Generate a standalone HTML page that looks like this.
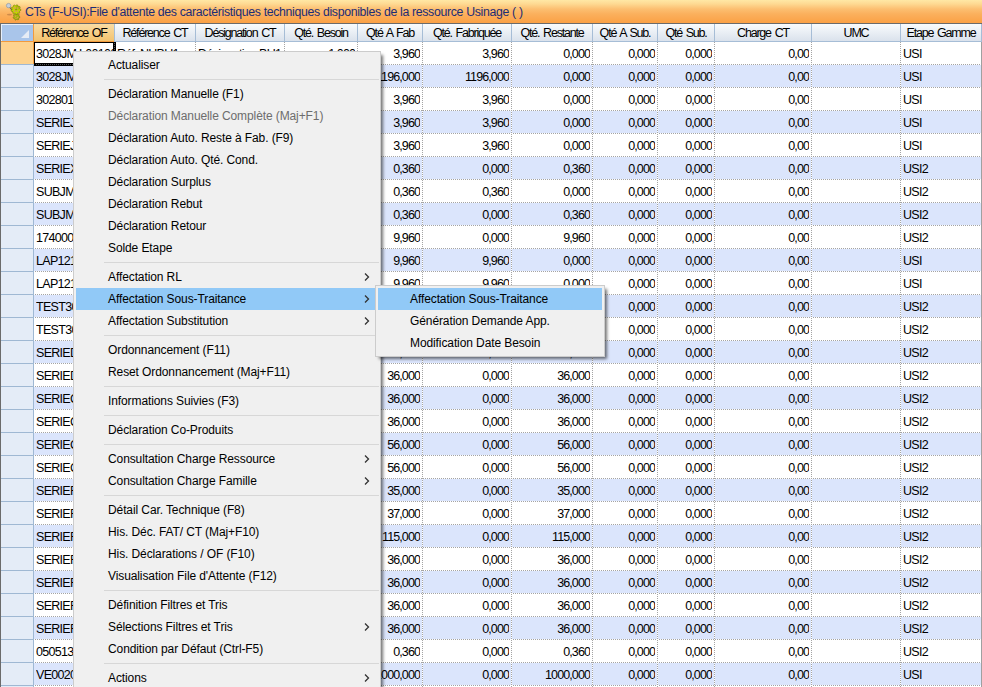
<!DOCTYPE html><html><head><meta charset="utf-8"><style>
*{margin:0;padding:0;box-sizing:border-box}
html,body{width:982px;height:687px;overflow:hidden;background:#fff;position:relative}
body{font-family:"Liberation Sans",sans-serif}
.a{position:absolute}
#title{left:0;top:0;width:982px;height:23px;background:linear-gradient(#ffe8a5 0px,#fed992 4px,#fcbf71 9px,#fbb05d 14px,#fba145 23px)}
#ttext{left:25px;top:5px;font-size:12.3px;letter-spacing:-0.33px;color:#1b2d76;white-space:pre;line-height:14px}
#tline{left:0;top:23px;width:982px;height:1px;background:#6b6b6b}
#lborder{left:0;top:23px;width:1px;height:664px;background:#6b6b6b}
#rborder{left:981px;top:42px;width:1px;height:645px;background:#a0a0a0}
.hdr{top:24px;height:17px;background:linear-gradient(#f9fbfd,#dde4ee);border-bottom:0}
.hb{top:41px;height:1px;background:#a6bdd6}
.hv{top:24px;width:1px;height:18px;background:#a6bdd6}
.ht{top:25px;height:17px;line-height:17px;font-size:12.5px;letter-spacing:-1.2px;word-spacing:1.5px;color:#000;white-space:pre;text-align:center;overflow:hidden}
.row{left:34px;width:947px;height:23px}
.blue{background:#dbe5fc}
.hdots{left:34px;width:947px;height:1px;background:repeating-linear-gradient(90deg,#fff 0 1px,#a4a4a4 1px 2px)}
.vdots{top:42px;width:1px;height:645px;background:repeating-linear-gradient(180deg,#a4a4a4 0 1px,#fff 1px 2px)}
.rh{left:1px;width:32px;height:22px;background:#e4ecf7}
.rhb{left:1px;width:32px;height:1px;background:#9fb8d3}
.cell{height:23px;line-height:23px;font-size:12.5px;letter-spacing:-0.7px;color:#000;white-space:pre;overflow:hidden}
.r{text-align:right;letter-spacing:-0.9px}
#menu{left:73px;top:51px;width:308px;height:640px;background:#f0f0f0;border:1px solid #cccccc;box-shadow:3px 3px 3px -1px rgba(0,0,0,.55)}
.mi{left:2px;width:302px;height:22px;font-size:12px;letter-spacing:-0.1px;line-height:22px;color:#000;white-space:pre}
.mi span{position:absolute;left:32px;top:0}
.msep{left:30px;width:275px;height:1px;background:#d7d7d7}
.hl{background:#91c9f7}
.dis{color:#6d6d6d}
.arr{position:absolute;left:287px;top:7px;width:8px;height:8px}
#sub{left:375px;top:285px;width:230px;height:72px;background:#f0f0f0;border:1px solid #cccccc;box-shadow:3px 3px 3px -1px rgba(0,0,0,.55)}
</style></head><body>
<div id="title" class="a"></div>
<svg class="a" style="left:5px;top:2px" width="18" height="19" viewBox="0 0 18 19">
<ellipse cx="4.5" cy="12.6" rx="2.6" ry="0.9" fill="#9a6236" opacity=".45"/>
<line x1="4" y1="4.5" x2="8.5" y2="10" stroke="#5e5e50" stroke-width="1.1"/>
<circle cx="3.6" cy="3.6" r="2.2" fill="#c5d0db" stroke="#8d99a6" stroke-width="0.7"/>
<path d="M14.90,14.80 L14.81,15.56 L13.93,15.97 L13.61,16.48 L13.62,17.46 L12.98,17.86 L12.10,17.43 L11.50,17.50 L10.74,18.11 L10.02,17.86 L9.82,16.91 L9.39,16.48 L8.44,16.28 L8.19,15.56 L8.80,14.80 L8.87,14.20 L8.44,13.32 L8.84,12.68 L9.82,12.69 L10.33,12.37 L10.74,11.49 L11.50,11.40 L12.10,12.17 L12.67,12.37 L13.62,12.14 L14.16,12.68 L13.93,13.63 L14.13,14.20Z" fill="#a9b80a" stroke="#6d7a08" stroke-width="0.6"/>
<path d="M15.90,7.60 L15.83,8.45 L14.76,8.97 L14.46,9.60 L14.75,10.75 L14.15,11.35 L13.00,11.06 L12.37,11.36 L11.85,12.43 L11.00,12.50 L10.31,11.54 L9.63,11.36 L8.55,11.84 L7.85,11.35 L7.94,10.17 L7.54,9.60 L6.40,9.28 L6.17,8.45 L7.00,7.60 L7.06,6.91 L6.40,5.92 L6.76,5.15 L7.94,5.03 L8.43,4.54 L8.55,3.36 L9.32,3.00 L10.31,3.66 L11.00,3.60 L11.85,2.77 L12.68,3.00 L13.00,4.14 L13.57,4.54 L14.75,4.45 L15.24,5.15 L14.76,6.23 L14.94,6.91Z" fill="#c4d600" stroke="#6d7a08" stroke-width="0.6"/>
<path d="M11 3.6 A4 4 0 0 1 15 7.6 L11 7.6Z" fill="#8f9c08" opacity=".5"/>
<g fill="#d79a55">
<circle cx="9.6" cy="6.0" r="0.95"/><circle cx="12.6" cy="6.1" r="0.95"/><circle cx="9.7" cy="9.3" r="0.95"/><circle cx="12.5" cy="9.2" r="0.85"/>
<circle cx="10.3" cy="14.2" r="0.75"/><circle cx="12.6" cy="15.4" r="0.75"/><circle cx="11" cy="16.6" r="0.6"/>
</g>
<circle cx="11" cy="7.6" r="0.8" fill="#7b8a10"/>
</svg>
<div id="ttext" class="a">CTs (F-USI):File d'attente des caractéristiques techniques disponibles de la ressource Usinage ( )</div>
<div id="tline" class="a"></div>
<div class="a" style="left:1px;top:24px;width:32px;height:17px;background:#a9c5ea;border-top:1px solid #e8f0fb;border-left:1px solid #e8f0fb"></div>
<svg class="a" style="left:21px;top:30px" width="9" height="9"><polygon points="8,0 8,8 0,8" fill="#e6ecf5"/></svg>
<div class="a" style="left:33px;top:24px;width:1px;height:18px;background:#f29a3c"></div>
<div class="a hdr" style="left:34px;width:80px;background:linear-gradient(#f9dca4,#f3c36e)"></div>
<div class="a ht" style="left:34px;width:80px">Référence OF</div>
<div class="a hb" style="left:33px;width:81px;background:#f29a3c"></div>
<div class="a hv" style="left:114px"></div>
<div class="a hdr" style="left:115px;width:80px;background:linear-gradient(#f9fbfd,#dae2ec)"></div>
<div class="a ht" style="left:115px;width:80px">Référence CT</div>
<div class="a hb" style="left:115px;width:80px;background:#a6bdd6"></div>
<div class="a hv" style="left:195px"></div>
<div class="a hdr" style="left:196px;width:88px;background:linear-gradient(#f9fbfd,#dae2ec)"></div>
<div class="a ht" style="left:196px;width:88px">Désignation CT</div>
<div class="a hb" style="left:196px;width:88px;background:#a6bdd6"></div>
<div class="a hv" style="left:284px"></div>
<div class="a hdr" style="left:285px;width:72px;background:linear-gradient(#f9fbfd,#dae2ec)"></div>
<div class="a ht" style="left:285px;width:72px">Qté. Besoin</div>
<div class="a hb" style="left:285px;width:72px;background:#a6bdd6"></div>
<div class="a hv" style="left:357px"></div>
<div class="a hdr" style="left:358px;width:64px;background:linear-gradient(#f9fbfd,#dae2ec)"></div>
<div class="a ht" style="left:358px;width:64px">Qté A Fab</div>
<div class="a hb" style="left:358px;width:64px;background:#a6bdd6"></div>
<div class="a hv" style="left:422px"></div>
<div class="a hdr" style="left:423px;width:88px;background:linear-gradient(#f9fbfd,#dae2ec)"></div>
<div class="a ht" style="left:423px;width:88px">Qté. Fabriquée</div>
<div class="a hb" style="left:423px;width:88px;background:#a6bdd6"></div>
<div class="a hv" style="left:511px"></div>
<div class="a hdr" style="left:512px;width:80px;background:linear-gradient(#f9fbfd,#dae2ec)"></div>
<div class="a ht" style="left:512px;width:80px">Qté. Restante</div>
<div class="a hb" style="left:512px;width:80px;background:#a6bdd6"></div>
<div class="a hv" style="left:592px"></div>
<div class="a hdr" style="left:593px;width:64px;background:linear-gradient(#f9fbfd,#dae2ec)"></div>
<div class="a ht" style="left:593px;width:64px">Qté A Sub.</div>
<div class="a hb" style="left:593px;width:64px;background:#a6bdd6"></div>
<div class="a hv" style="left:657px"></div>
<div class="a hdr" style="left:658px;width:56px;background:linear-gradient(#f9fbfd,#dae2ec)"></div>
<div class="a ht" style="left:658px;width:56px">Qté Sub.</div>
<div class="a hb" style="left:658px;width:56px;background:#a6bdd6"></div>
<div class="a hv" style="left:714px"></div>
<div class="a hdr" style="left:715px;width:96px;background:linear-gradient(#f9fbfd,#dae2ec)"></div>
<div class="a ht" style="left:715px;width:96px">Charge CT</div>
<div class="a hb" style="left:715px;width:96px;background:#a6bdd6"></div>
<div class="a hv" style="left:811px"></div>
<div class="a hdr" style="left:812px;width:88px;background:linear-gradient(#f9fbfd,#dae2ec)"></div>
<div class="a ht" style="left:812px;width:88px">UMC</div>
<div class="a hb" style="left:812px;width:88px;background:#a6bdd6"></div>
<div class="a hv" style="left:900px"></div>
<div class="a hdr" style="left:901px;width:80px;background:linear-gradient(#f9fbfd,#dae2ec)"></div>
<div class="a ht" style="left:901px;width:80px">Etape Gamme</div>
<div class="a hb" style="left:901px;width:80px;background:#a6bdd6"></div>
<div class="a hv" style="left:981px"></div>
<div class="a hb" style="left:0px;width:34px;background:#f29a3c"></div>
<div class="a hdots" style="top:64px"></div>
<div class="a rh" style="top:42px;background:#fdd28e"></div>
<div class="a rhb" style="top:64px"></div>
<div class="a cell" style="left:36px;top:43px;width:78px">3028JM L001009</div>
<div class="a cell" style="left:117px;top:43px;width:78px">Réf. NHBU1</div>
<div class="a cell" style="left:198px;top:43px;width:86px">Désignation BU1</div>
<div class="a cell r" style="left:285px;top:43px;width:70px">1,000</div>
<div class="a cell r" style="left:358px;top:43px;width:62px">3,960</div>
<div class="a cell r" style="left:423px;top:43px;width:86px">3,960</div>
<div class="a cell r" style="left:512px;top:43px;width:78px">0,000</div>
<div class="a cell r" style="left:593px;top:43px;width:62px">0,000</div>
<div class="a cell r" style="left:658px;top:43px;width:54px">0,000</div>
<div class="a cell r" style="left:715px;top:43px;width:94px">0,00</div>
<div class="a cell" style="left:903px;top:43px;width:78px">USI</div>
<div class="a row blue" style="top:65px"></div>
<div class="a hdots" style="top:87px"></div>
<div class="a rh" style="top:65px;background:#e4ecf7"></div>
<div class="a rhb" style="top:87px"></div>
<div class="a cell" style="left:36px;top:66px;width:78px">3028JML001010</div>
<div class="a cell" style="left:117px;top:66px;width:78px">Réf. NHBU1</div>
<div class="a cell" style="left:198px;top:66px;width:86px">Désignation BU1</div>
<div class="a cell r" style="left:285px;top:66px;width:70px">1,000</div>
<div class="a cell r" style="left:358px;top:66px;width:62px">1196,000</div>
<div class="a cell r" style="left:423px;top:66px;width:86px">1196,000</div>
<div class="a cell r" style="left:512px;top:66px;width:78px">0,000</div>
<div class="a cell r" style="left:593px;top:66px;width:62px">0,000</div>
<div class="a cell r" style="left:658px;top:66px;width:54px">0,000</div>
<div class="a cell r" style="left:715px;top:66px;width:94px">0,00</div>
<div class="a cell" style="left:903px;top:66px;width:78px">USI</div>
<div class="a hdots" style="top:110px"></div>
<div class="a rh" style="top:88px;background:#e4ecf7"></div>
<div class="a rhb" style="top:110px"></div>
<div class="a cell" style="left:36px;top:89px;width:78px">302801JML0010</div>
<div class="a cell" style="left:117px;top:89px;width:78px">Réf. NHBU1</div>
<div class="a cell" style="left:198px;top:89px;width:86px">Désignation BU1</div>
<div class="a cell r" style="left:285px;top:89px;width:70px">1,000</div>
<div class="a cell r" style="left:358px;top:89px;width:62px">3,960</div>
<div class="a cell r" style="left:423px;top:89px;width:86px">3,960</div>
<div class="a cell r" style="left:512px;top:89px;width:78px">0,000</div>
<div class="a cell r" style="left:593px;top:89px;width:62px">0,000</div>
<div class="a cell r" style="left:658px;top:89px;width:54px">0,000</div>
<div class="a cell r" style="left:715px;top:89px;width:94px">0,00</div>
<div class="a cell" style="left:903px;top:89px;width:78px">USI</div>
<div class="a row blue" style="top:111px"></div>
<div class="a hdots" style="top:133px"></div>
<div class="a rh" style="top:111px;background:#e4ecf7"></div>
<div class="a rhb" style="top:133px"></div>
<div class="a cell" style="left:36px;top:112px;width:78px">SERIEJML00101</div>
<div class="a cell" style="left:117px;top:112px;width:78px">Réf. NHBU1</div>
<div class="a cell" style="left:198px;top:112px;width:86px">Désignation BU1</div>
<div class="a cell r" style="left:285px;top:112px;width:70px">1,000</div>
<div class="a cell r" style="left:358px;top:112px;width:62px">3,960</div>
<div class="a cell r" style="left:423px;top:112px;width:86px">3,960</div>
<div class="a cell r" style="left:512px;top:112px;width:78px">0,000</div>
<div class="a cell r" style="left:593px;top:112px;width:62px">0,000</div>
<div class="a cell r" style="left:658px;top:112px;width:54px">0,000</div>
<div class="a cell r" style="left:715px;top:112px;width:94px">0,00</div>
<div class="a cell" style="left:903px;top:112px;width:78px">USI</div>
<div class="a hdots" style="top:156px"></div>
<div class="a rh" style="top:134px;background:#e4ecf7"></div>
<div class="a rhb" style="top:156px"></div>
<div class="a cell" style="left:36px;top:135px;width:78px">SERIEJML00102</div>
<div class="a cell" style="left:117px;top:135px;width:78px">Réf. NHBU1</div>
<div class="a cell" style="left:198px;top:135px;width:86px">Désignation BU1</div>
<div class="a cell r" style="left:285px;top:135px;width:70px">1,000</div>
<div class="a cell r" style="left:358px;top:135px;width:62px">3,960</div>
<div class="a cell r" style="left:423px;top:135px;width:86px">3,960</div>
<div class="a cell r" style="left:512px;top:135px;width:78px">0,000</div>
<div class="a cell r" style="left:593px;top:135px;width:62px">0,000</div>
<div class="a cell r" style="left:658px;top:135px;width:54px">0,000</div>
<div class="a cell r" style="left:715px;top:135px;width:94px">0,00</div>
<div class="a cell" style="left:903px;top:135px;width:78px">USI</div>
<div class="a row blue" style="top:157px"></div>
<div class="a hdots" style="top:179px"></div>
<div class="a rh" style="top:157px;background:#e4ecf7"></div>
<div class="a rhb" style="top:179px"></div>
<div class="a cell" style="left:36px;top:158px;width:78px">SERIEXML00103</div>
<div class="a cell" style="left:117px;top:158px;width:78px">Réf. NHBU1</div>
<div class="a cell" style="left:198px;top:158px;width:86px">Désignation BU1</div>
<div class="a cell r" style="left:285px;top:158px;width:70px">1,000</div>
<div class="a cell r" style="left:358px;top:158px;width:62px">0,360</div>
<div class="a cell r" style="left:423px;top:158px;width:86px">0,000</div>
<div class="a cell r" style="left:512px;top:158px;width:78px">0,360</div>
<div class="a cell r" style="left:593px;top:158px;width:62px">0,000</div>
<div class="a cell r" style="left:658px;top:158px;width:54px">0,000</div>
<div class="a cell r" style="left:715px;top:158px;width:94px">0,00</div>
<div class="a cell" style="left:903px;top:158px;width:78px">USI2</div>
<div class="a hdots" style="top:202px"></div>
<div class="a rh" style="top:180px;background:#e4ecf7"></div>
<div class="a rhb" style="top:202px"></div>
<div class="a cell" style="left:36px;top:181px;width:78px">SUBJML0010400</div>
<div class="a cell" style="left:117px;top:181px;width:78px">Réf. NHBU1</div>
<div class="a cell" style="left:198px;top:181px;width:86px">Désignation BU1</div>
<div class="a cell r" style="left:285px;top:181px;width:70px">1,000</div>
<div class="a cell r" style="left:358px;top:181px;width:62px">0,360</div>
<div class="a cell r" style="left:423px;top:181px;width:86px">0,360</div>
<div class="a cell r" style="left:512px;top:181px;width:78px">0,000</div>
<div class="a cell r" style="left:593px;top:181px;width:62px">0,000</div>
<div class="a cell r" style="left:658px;top:181px;width:54px">0,000</div>
<div class="a cell r" style="left:715px;top:181px;width:94px">0,00</div>
<div class="a cell" style="left:903px;top:181px;width:78px">USI2</div>
<div class="a row blue" style="top:203px"></div>
<div class="a hdots" style="top:225px"></div>
<div class="a rh" style="top:203px;background:#e4ecf7"></div>
<div class="a rhb" style="top:225px"></div>
<div class="a cell" style="left:36px;top:204px;width:78px">SUBJML0010500</div>
<div class="a cell" style="left:117px;top:204px;width:78px">Réf. NHBU1</div>
<div class="a cell" style="left:198px;top:204px;width:86px">Désignation BU1</div>
<div class="a cell r" style="left:285px;top:204px;width:70px">1,000</div>
<div class="a cell r" style="left:358px;top:204px;width:62px">0,360</div>
<div class="a cell r" style="left:423px;top:204px;width:86px">0,000</div>
<div class="a cell r" style="left:512px;top:204px;width:78px">0,360</div>
<div class="a cell r" style="left:593px;top:204px;width:62px">0,000</div>
<div class="a cell r" style="left:658px;top:204px;width:54px">0,000</div>
<div class="a cell r" style="left:715px;top:204px;width:94px">0,00</div>
<div class="a cell" style="left:903px;top:204px;width:78px">USI2</div>
<div class="a hdots" style="top:248px"></div>
<div class="a rh" style="top:226px;background:#e4ecf7"></div>
<div class="a rhb" style="top:248px"></div>
<div class="a cell" style="left:36px;top:227px;width:78px">174000L001060</div>
<div class="a cell" style="left:117px;top:227px;width:78px">Réf. NHBU1</div>
<div class="a cell" style="left:198px;top:227px;width:86px">Désignation BU1</div>
<div class="a cell r" style="left:285px;top:227px;width:70px">1,000</div>
<div class="a cell r" style="left:358px;top:227px;width:62px">9,960</div>
<div class="a cell r" style="left:423px;top:227px;width:86px">0,000</div>
<div class="a cell r" style="left:512px;top:227px;width:78px">9,960</div>
<div class="a cell r" style="left:593px;top:227px;width:62px">0,000</div>
<div class="a cell r" style="left:658px;top:227px;width:54px">0,000</div>
<div class="a cell r" style="left:715px;top:227px;width:94px">0,00</div>
<div class="a cell" style="left:903px;top:227px;width:78px">USI2</div>
<div class="a row blue" style="top:249px"></div>
<div class="a hdots" style="top:271px"></div>
<div class="a rh" style="top:249px;background:#e4ecf7"></div>
<div class="a rhb" style="top:271px"></div>
<div class="a cell" style="left:36px;top:250px;width:78px">LAP121L001070</div>
<div class="a cell" style="left:117px;top:250px;width:78px">Réf. NHBU1</div>
<div class="a cell" style="left:198px;top:250px;width:86px">Désignation BU1</div>
<div class="a cell r" style="left:285px;top:250px;width:70px">1,000</div>
<div class="a cell r" style="left:358px;top:250px;width:62px">9,960</div>
<div class="a cell r" style="left:423px;top:250px;width:86px">9,960</div>
<div class="a cell r" style="left:512px;top:250px;width:78px">0,000</div>
<div class="a cell r" style="left:593px;top:250px;width:62px">0,000</div>
<div class="a cell r" style="left:658px;top:250px;width:54px">0,000</div>
<div class="a cell r" style="left:715px;top:250px;width:94px">0,00</div>
<div class="a cell" style="left:903px;top:250px;width:78px">USI</div>
<div class="a hdots" style="top:294px"></div>
<div class="a rh" style="top:272px;background:#e4ecf7"></div>
<div class="a rhb" style="top:294px"></div>
<div class="a cell" style="left:36px;top:273px;width:78px">LAP121L001080</div>
<div class="a cell" style="left:117px;top:273px;width:78px">Réf. NHBU1</div>
<div class="a cell" style="left:198px;top:273px;width:86px">Désignation BU1</div>
<div class="a cell r" style="left:285px;top:273px;width:70px">1,000</div>
<div class="a cell r" style="left:358px;top:273px;width:62px">9,960</div>
<div class="a cell r" style="left:423px;top:273px;width:86px">9,960</div>
<div class="a cell r" style="left:512px;top:273px;width:78px">0,000</div>
<div class="a cell r" style="left:593px;top:273px;width:62px">0,000</div>
<div class="a cell r" style="left:658px;top:273px;width:54px">0,000</div>
<div class="a cell r" style="left:715px;top:273px;width:94px">0,00</div>
<div class="a cell" style="left:903px;top:273px;width:78px">USI</div>
<div class="a row blue" style="top:295px"></div>
<div class="a hdots" style="top:317px"></div>
<div class="a rh" style="top:295px;background:#e4ecf7"></div>
<div class="a rhb" style="top:317px"></div>
<div class="a cell" style="left:36px;top:296px;width:78px">TEST30L001090</div>
<div class="a cell" style="left:117px;top:296px;width:78px">Réf. NHBU1</div>
<div class="a cell" style="left:198px;top:296px;width:86px">Désignation BU1</div>
<div class="a cell r" style="left:285px;top:296px;width:70px">1,000</div>
<div class="a cell r" style="left:358px;top:296px;width:62px">9,960</div>
<div class="a cell r" style="left:423px;top:296px;width:86px">0,000</div>
<div class="a cell r" style="left:512px;top:296px;width:78px">9,960</div>
<div class="a cell r" style="left:593px;top:296px;width:62px">0,000</div>
<div class="a cell r" style="left:658px;top:296px;width:54px">0,000</div>
<div class="a cell r" style="left:715px;top:296px;width:94px">0,00</div>
<div class="a cell" style="left:903px;top:296px;width:78px">USI2</div>
<div class="a hdots" style="top:340px"></div>
<div class="a rh" style="top:318px;background:#e4ecf7"></div>
<div class="a rhb" style="top:340px"></div>
<div class="a cell" style="left:36px;top:319px;width:78px">TEST30L001100</div>
<div class="a cell" style="left:117px;top:319px;width:78px">Réf. NHBU1</div>
<div class="a cell" style="left:198px;top:319px;width:86px">Désignation BU1</div>
<div class="a cell r" style="left:285px;top:319px;width:70px">1,000</div>
<div class="a cell r" style="left:358px;top:319px;width:62px">9,960</div>
<div class="a cell r" style="left:423px;top:319px;width:86px">0,000</div>
<div class="a cell r" style="left:512px;top:319px;width:78px">9,960</div>
<div class="a cell r" style="left:593px;top:319px;width:62px">0,000</div>
<div class="a cell r" style="left:658px;top:319px;width:54px">0,000</div>
<div class="a cell r" style="left:715px;top:319px;width:94px">0,00</div>
<div class="a cell" style="left:903px;top:319px;width:78px">USI2</div>
<div class="a row blue" style="top:341px"></div>
<div class="a hdots" style="top:363px"></div>
<div class="a rh" style="top:341px;background:#e4ecf7"></div>
<div class="a rhb" style="top:363px"></div>
<div class="a cell" style="left:36px;top:342px;width:78px">SERIEDL001110</div>
<div class="a cell" style="left:117px;top:342px;width:78px">Réf. NHBU1</div>
<div class="a cell" style="left:198px;top:342px;width:86px">Désignation BU1</div>
<div class="a cell r" style="left:285px;top:342px;width:70px">1,000</div>
<div class="a cell r" style="left:358px;top:342px;width:62px">36,000</div>
<div class="a cell r" style="left:423px;top:342px;width:86px">0,000</div>
<div class="a cell r" style="left:512px;top:342px;width:78px">36,000</div>
<div class="a cell r" style="left:593px;top:342px;width:62px">0,000</div>
<div class="a cell r" style="left:658px;top:342px;width:54px">0,000</div>
<div class="a cell r" style="left:715px;top:342px;width:94px">0,00</div>
<div class="a cell" style="left:903px;top:342px;width:78px">USI2</div>
<div class="a hdots" style="top:386px"></div>
<div class="a rh" style="top:364px;background:#e4ecf7"></div>
<div class="a rhb" style="top:386px"></div>
<div class="a cell" style="left:36px;top:365px;width:78px">SERIEDL001120</div>
<div class="a cell" style="left:117px;top:365px;width:78px">Réf. NHBU1</div>
<div class="a cell" style="left:198px;top:365px;width:86px">Désignation BU1</div>
<div class="a cell r" style="left:285px;top:365px;width:70px">1,000</div>
<div class="a cell r" style="left:358px;top:365px;width:62px">36,000</div>
<div class="a cell r" style="left:423px;top:365px;width:86px">0,000</div>
<div class="a cell r" style="left:512px;top:365px;width:78px">36,000</div>
<div class="a cell r" style="left:593px;top:365px;width:62px">0,000</div>
<div class="a cell r" style="left:658px;top:365px;width:54px">0,000</div>
<div class="a cell r" style="left:715px;top:365px;width:94px">0,00</div>
<div class="a cell" style="left:903px;top:365px;width:78px">USI2</div>
<div class="a row blue" style="top:387px"></div>
<div class="a hdots" style="top:409px"></div>
<div class="a rh" style="top:387px;background:#e4ecf7"></div>
<div class="a rhb" style="top:409px"></div>
<div class="a cell" style="left:36px;top:388px;width:78px">SERIECL001130</div>
<div class="a cell" style="left:117px;top:388px;width:78px">Réf. NHBU1</div>
<div class="a cell" style="left:198px;top:388px;width:86px">Désignation BU1</div>
<div class="a cell r" style="left:285px;top:388px;width:70px">1,000</div>
<div class="a cell r" style="left:358px;top:388px;width:62px">36,000</div>
<div class="a cell r" style="left:423px;top:388px;width:86px">0,000</div>
<div class="a cell r" style="left:512px;top:388px;width:78px">36,000</div>
<div class="a cell r" style="left:593px;top:388px;width:62px">0,000</div>
<div class="a cell r" style="left:658px;top:388px;width:54px">0,000</div>
<div class="a cell r" style="left:715px;top:388px;width:94px">0,00</div>
<div class="a cell" style="left:903px;top:388px;width:78px">USI2</div>
<div class="a hdots" style="top:432px"></div>
<div class="a rh" style="top:410px;background:#e4ecf7"></div>
<div class="a rhb" style="top:432px"></div>
<div class="a cell" style="left:36px;top:411px;width:78px">SERIECL001140</div>
<div class="a cell" style="left:117px;top:411px;width:78px">Réf. NHBU1</div>
<div class="a cell" style="left:198px;top:411px;width:86px">Désignation BU1</div>
<div class="a cell r" style="left:285px;top:411px;width:70px">1,000</div>
<div class="a cell r" style="left:358px;top:411px;width:62px">36,000</div>
<div class="a cell r" style="left:423px;top:411px;width:86px">0,000</div>
<div class="a cell r" style="left:512px;top:411px;width:78px">36,000</div>
<div class="a cell r" style="left:593px;top:411px;width:62px">0,000</div>
<div class="a cell r" style="left:658px;top:411px;width:54px">0,000</div>
<div class="a cell r" style="left:715px;top:411px;width:94px">0,00</div>
<div class="a cell" style="left:903px;top:411px;width:78px">USI2</div>
<div class="a row blue" style="top:433px"></div>
<div class="a hdots" style="top:455px"></div>
<div class="a rh" style="top:433px;background:#e4ecf7"></div>
<div class="a rhb" style="top:455px"></div>
<div class="a cell" style="left:36px;top:434px;width:78px">SERIECL001150</div>
<div class="a cell" style="left:117px;top:434px;width:78px">Réf. NHBU1</div>
<div class="a cell" style="left:198px;top:434px;width:86px">Désignation BU1</div>
<div class="a cell r" style="left:285px;top:434px;width:70px">1,000</div>
<div class="a cell r" style="left:358px;top:434px;width:62px">56,000</div>
<div class="a cell r" style="left:423px;top:434px;width:86px">0,000</div>
<div class="a cell r" style="left:512px;top:434px;width:78px">56,000</div>
<div class="a cell r" style="left:593px;top:434px;width:62px">0,000</div>
<div class="a cell r" style="left:658px;top:434px;width:54px">0,000</div>
<div class="a cell r" style="left:715px;top:434px;width:94px">0,00</div>
<div class="a cell" style="left:903px;top:434px;width:78px">USI2</div>
<div class="a hdots" style="top:478px"></div>
<div class="a rh" style="top:456px;background:#e4ecf7"></div>
<div class="a rhb" style="top:478px"></div>
<div class="a cell" style="left:36px;top:457px;width:78px">SERIECL001160</div>
<div class="a cell" style="left:117px;top:457px;width:78px">Réf. NHBU1</div>
<div class="a cell" style="left:198px;top:457px;width:86px">Désignation BU1</div>
<div class="a cell r" style="left:285px;top:457px;width:70px">1,000</div>
<div class="a cell r" style="left:358px;top:457px;width:62px">56,000</div>
<div class="a cell r" style="left:423px;top:457px;width:86px">0,000</div>
<div class="a cell r" style="left:512px;top:457px;width:78px">56,000</div>
<div class="a cell r" style="left:593px;top:457px;width:62px">0,000</div>
<div class="a cell r" style="left:658px;top:457px;width:54px">0,000</div>
<div class="a cell r" style="left:715px;top:457px;width:94px">0,00</div>
<div class="a cell" style="left:903px;top:457px;width:78px">USI2</div>
<div class="a row blue" style="top:479px"></div>
<div class="a hdots" style="top:501px"></div>
<div class="a rh" style="top:479px;background:#e4ecf7"></div>
<div class="a rhb" style="top:501px"></div>
<div class="a cell" style="left:36px;top:480px;width:78px">SERIEFL001170</div>
<div class="a cell" style="left:117px;top:480px;width:78px">Réf. NHBU1</div>
<div class="a cell" style="left:198px;top:480px;width:86px">Désignation BU1</div>
<div class="a cell r" style="left:285px;top:480px;width:70px">1,000</div>
<div class="a cell r" style="left:358px;top:480px;width:62px">35,000</div>
<div class="a cell r" style="left:423px;top:480px;width:86px">0,000</div>
<div class="a cell r" style="left:512px;top:480px;width:78px">35,000</div>
<div class="a cell r" style="left:593px;top:480px;width:62px">0,000</div>
<div class="a cell r" style="left:658px;top:480px;width:54px">0,000</div>
<div class="a cell r" style="left:715px;top:480px;width:94px">0,00</div>
<div class="a cell" style="left:903px;top:480px;width:78px">USI2</div>
<div class="a hdots" style="top:524px"></div>
<div class="a rh" style="top:502px;background:#e4ecf7"></div>
<div class="a rhb" style="top:524px"></div>
<div class="a cell" style="left:36px;top:503px;width:78px">SERIEFL001180</div>
<div class="a cell" style="left:117px;top:503px;width:78px">Réf. NHBU1</div>
<div class="a cell" style="left:198px;top:503px;width:86px">Désignation BU1</div>
<div class="a cell r" style="left:285px;top:503px;width:70px">1,000</div>
<div class="a cell r" style="left:358px;top:503px;width:62px">37,000</div>
<div class="a cell r" style="left:423px;top:503px;width:86px">0,000</div>
<div class="a cell r" style="left:512px;top:503px;width:78px">37,000</div>
<div class="a cell r" style="left:593px;top:503px;width:62px">0,000</div>
<div class="a cell r" style="left:658px;top:503px;width:54px">0,000</div>
<div class="a cell r" style="left:715px;top:503px;width:94px">0,00</div>
<div class="a cell" style="left:903px;top:503px;width:78px">USI2</div>
<div class="a row blue" style="top:525px"></div>
<div class="a hdots" style="top:547px"></div>
<div class="a rh" style="top:525px;background:#e4ecf7"></div>
<div class="a rhb" style="top:547px"></div>
<div class="a cell" style="left:36px;top:526px;width:78px">SERIEFL001190</div>
<div class="a cell" style="left:117px;top:526px;width:78px">Réf. NHBU1</div>
<div class="a cell" style="left:198px;top:526px;width:86px">Désignation BU1</div>
<div class="a cell r" style="left:285px;top:526px;width:70px">1,000</div>
<div class="a cell r" style="left:358px;top:526px;width:62px">115,000</div>
<div class="a cell r" style="left:423px;top:526px;width:86px">0,000</div>
<div class="a cell r" style="left:512px;top:526px;width:78px">115,000</div>
<div class="a cell r" style="left:593px;top:526px;width:62px">0,000</div>
<div class="a cell r" style="left:658px;top:526px;width:54px">0,000</div>
<div class="a cell r" style="left:715px;top:526px;width:94px">0,00</div>
<div class="a cell" style="left:903px;top:526px;width:78px">USI2</div>
<div class="a hdots" style="top:570px"></div>
<div class="a rh" style="top:548px;background:#e4ecf7"></div>
<div class="a rhb" style="top:570px"></div>
<div class="a cell" style="left:36px;top:549px;width:78px">SERIEFL001200</div>
<div class="a cell" style="left:117px;top:549px;width:78px">Réf. NHBU1</div>
<div class="a cell" style="left:198px;top:549px;width:86px">Désignation BU1</div>
<div class="a cell r" style="left:285px;top:549px;width:70px">1,000</div>
<div class="a cell r" style="left:358px;top:549px;width:62px">36,000</div>
<div class="a cell r" style="left:423px;top:549px;width:86px">0,000</div>
<div class="a cell r" style="left:512px;top:549px;width:78px">36,000</div>
<div class="a cell r" style="left:593px;top:549px;width:62px">0,000</div>
<div class="a cell r" style="left:658px;top:549px;width:54px">0,000</div>
<div class="a cell r" style="left:715px;top:549px;width:94px">0,00</div>
<div class="a cell" style="left:903px;top:549px;width:78px">USI2</div>
<div class="a row blue" style="top:571px"></div>
<div class="a hdots" style="top:593px"></div>
<div class="a rh" style="top:571px;background:#e4ecf7"></div>
<div class="a rhb" style="top:593px"></div>
<div class="a cell" style="left:36px;top:572px;width:78px">SERIEFL001210</div>
<div class="a cell" style="left:117px;top:572px;width:78px">Réf. NHBU1</div>
<div class="a cell" style="left:198px;top:572px;width:86px">Désignation BU1</div>
<div class="a cell r" style="left:285px;top:572px;width:70px">1,000</div>
<div class="a cell r" style="left:358px;top:572px;width:62px">36,000</div>
<div class="a cell r" style="left:423px;top:572px;width:86px">0,000</div>
<div class="a cell r" style="left:512px;top:572px;width:78px">36,000</div>
<div class="a cell r" style="left:593px;top:572px;width:62px">0,000</div>
<div class="a cell r" style="left:658px;top:572px;width:54px">0,000</div>
<div class="a cell r" style="left:715px;top:572px;width:94px">0,00</div>
<div class="a cell" style="left:903px;top:572px;width:78px">USI2</div>
<div class="a hdots" style="top:616px"></div>
<div class="a rh" style="top:594px;background:#e4ecf7"></div>
<div class="a rhb" style="top:616px"></div>
<div class="a cell" style="left:36px;top:595px;width:78px">SERIEFL001220</div>
<div class="a cell" style="left:117px;top:595px;width:78px">Réf. NHBU1</div>
<div class="a cell" style="left:198px;top:595px;width:86px">Désignation BU1</div>
<div class="a cell r" style="left:285px;top:595px;width:70px">1,000</div>
<div class="a cell r" style="left:358px;top:595px;width:62px">36,000</div>
<div class="a cell r" style="left:423px;top:595px;width:86px">0,000</div>
<div class="a cell r" style="left:512px;top:595px;width:78px">36,000</div>
<div class="a cell r" style="left:593px;top:595px;width:62px">0,000</div>
<div class="a cell r" style="left:658px;top:595px;width:54px">0,000</div>
<div class="a cell r" style="left:715px;top:595px;width:94px">0,00</div>
<div class="a cell" style="left:903px;top:595px;width:78px">USI2</div>
<div class="a row blue" style="top:617px"></div>
<div class="a hdots" style="top:639px"></div>
<div class="a rh" style="top:617px;background:#e4ecf7"></div>
<div class="a rhb" style="top:639px"></div>
<div class="a cell" style="left:36px;top:618px;width:78px">SERIEFL001230</div>
<div class="a cell" style="left:117px;top:618px;width:78px">Réf. NHBU1</div>
<div class="a cell" style="left:198px;top:618px;width:86px">Désignation BU1</div>
<div class="a cell r" style="left:285px;top:618px;width:70px">1,000</div>
<div class="a cell r" style="left:358px;top:618px;width:62px">36,000</div>
<div class="a cell r" style="left:423px;top:618px;width:86px">0,000</div>
<div class="a cell r" style="left:512px;top:618px;width:78px">36,000</div>
<div class="a cell r" style="left:593px;top:618px;width:62px">0,000</div>
<div class="a cell r" style="left:658px;top:618px;width:54px">0,000</div>
<div class="a cell r" style="left:715px;top:618px;width:94px">0,00</div>
<div class="a cell" style="left:903px;top:618px;width:78px">USI2</div>
<div class="a hdots" style="top:662px"></div>
<div class="a rh" style="top:640px;background:#e4ecf7"></div>
<div class="a rhb" style="top:662px"></div>
<div class="a cell" style="left:36px;top:641px;width:78px">050513L001240</div>
<div class="a cell" style="left:117px;top:641px;width:78px">Réf. NHBU1</div>
<div class="a cell" style="left:198px;top:641px;width:86px">Désignation BU1</div>
<div class="a cell r" style="left:285px;top:641px;width:70px">1,000</div>
<div class="a cell r" style="left:358px;top:641px;width:62px">0,360</div>
<div class="a cell r" style="left:423px;top:641px;width:86px">0,000</div>
<div class="a cell r" style="left:512px;top:641px;width:78px">0,360</div>
<div class="a cell r" style="left:593px;top:641px;width:62px">0,000</div>
<div class="a cell r" style="left:658px;top:641px;width:54px">0,000</div>
<div class="a cell r" style="left:715px;top:641px;width:94px">0,00</div>
<div class="a cell" style="left:903px;top:641px;width:78px">USI2</div>
<div class="a row blue" style="top:663px"></div>
<div class="a hdots" style="top:685px"></div>
<div class="a rh" style="top:663px;background:#e4ecf7"></div>
<div class="a rhb" style="top:685px"></div>
<div class="a cell" style="left:36px;top:664px;width:78px">VE0020L001250</div>
<div class="a cell" style="left:117px;top:664px;width:78px">Réf. NHBU1</div>
<div class="a cell" style="left:198px;top:664px;width:86px">Désignation BU1</div>
<div class="a cell r" style="left:285px;top:664px;width:70px">1,000</div>
<div class="a cell r" style="left:358px;top:664px;width:62px">1000,000</div>
<div class="a cell r" style="left:423px;top:664px;width:86px">0,000</div>
<div class="a cell r" style="left:512px;top:664px;width:78px">1000,000</div>
<div class="a cell r" style="left:593px;top:664px;width:62px">0,000</div>
<div class="a cell r" style="left:658px;top:664px;width:54px">0,000</div>
<div class="a cell r" style="left:715px;top:664px;width:94px">0,00</div>
<div class="a cell" style="left:903px;top:664px;width:78px">USI</div>
<div class="a hdots" style="top:708px"></div>
<div class="a rh" style="top:686px;background:#e4ecf7"></div>
<div class="a rhb" style="top:708px"></div>
<div class="a cell" style="left:36px;top:687px;width:78px">VE0020L001250</div>
<div class="a cell" style="left:117px;top:687px;width:78px">Réf. NHBU1</div>
<div class="a cell" style="left:198px;top:687px;width:86px">Désignation BU1</div>
<div class="a cell r" style="left:285px;top:687px;width:70px">1,000</div>
<div class="a cell r" style="left:358px;top:687px;width:62px">1000,000</div>
<div class="a cell r" style="left:423px;top:687px;width:86px">0,000</div>
<div class="a cell r" style="left:512px;top:687px;width:78px">1000,000</div>
<div class="a cell r" style="left:593px;top:687px;width:62px">0,000</div>
<div class="a cell r" style="left:658px;top:687px;width:54px">0,000</div>
<div class="a cell r" style="left:715px;top:687px;width:94px">0,00</div>
<div class="a cell" style="left:903px;top:687px;width:78px">USI</div>
<div class="a vdots" style="left:114px"></div>
<div class="a vdots" style="left:195px"></div>
<div class="a vdots" style="left:284px"></div>
<div class="a vdots" style="left:357px"></div>
<div class="a vdots" style="left:422px"></div>
<div class="a vdots" style="left:511px"></div>
<div class="a vdots" style="left:592px"></div>
<div class="a vdots" style="left:657px"></div>
<div class="a vdots" style="left:714px"></div>
<div class="a vdots" style="left:811px"></div>
<div class="a vdots" style="left:900px"></div>
<div class="a" style="left:33px;top:42px;width:1px;height:645px;background:#9fb8d3"></div>
<div class="a" style="left:33px;top:42px;width:1px;height:22px;background:#f29a3c"></div>
<div id="lborder" class="a"></div>
<div id="rborder" class="a"></div>
<div class="a" style="left:34px;top:42px;width:82px;height:24px;border-top:1px solid #000;border-left:1px solid #000;border-right:3px solid #000;border-bottom:3px solid #000"></div>
<div class="a" style="left:35px;top:64px;width:80px;height:1px;background:repeating-linear-gradient(90deg,#000 0 1px,#555 1px 2px)"></div>
<div class="a" style="left:114px;top:43px;width:1px;height:22px;background:repeating-linear-gradient(180deg,#555 0 1px,#000 1px 2px)"></div>
<div id="menu" class="a">
<div class="a mi" style="top:2px"><span>Actualiser</span></div>
<div class="a msep" style="top:27px"></div>
<div class="a mi" style="top:31px"><span>Déclaration Manuelle (F1)</span></div>
<div class="a mi dis" style="top:53px"><span>Déclaration Manuelle Complète (Maj+F1)</span></div>
<div class="a mi" style="top:75px"><span>Déclaration Auto. Reste à Fab. (F9)</span></div>
<div class="a mi" style="top:97px"><span>Déclaration Auto. Qté. Cond.</span></div>
<div class="a mi" style="top:119px"><span>Déclaration Surplus</span></div>
<div class="a mi" style="top:141px"><span>Déclaration Rebut</span></div>
<div class="a mi" style="top:163px"><span>Déclaration Retour</span></div>
<div class="a mi" style="top:185px"><span>Solde Etape</span></div>
<div class="a msep" style="top:210px"></div>
<div class="a mi" style="top:214px"><span>Affectation RL</span><svg class="arr" width="8" height="8" viewBox="0 0 8 8"><polyline points="2,0.5 5.5,4 2,7.5" fill="none" stroke="#333" stroke-width="1.3"/></svg></div>
<div class="a mi hl" style="top:236px"><span>Affectation Sous-Traitance</span><svg class="arr" width="8" height="8" viewBox="0 0 8 8"><polyline points="2,0.5 5.5,4 2,7.5" fill="none" stroke="#333" stroke-width="1.3"/></svg></div>
<div class="a mi" style="top:258px"><span>Affectation Substitution</span><svg class="arr" width="8" height="8" viewBox="0 0 8 8"><polyline points="2,0.5 5.5,4 2,7.5" fill="none" stroke="#333" stroke-width="1.3"/></svg></div>
<div class="a msep" style="top:283px"></div>
<div class="a mi" style="top:287px"><span>Ordonnancement (F11)</span></div>
<div class="a mi" style="top:309px"><span>Reset Ordonnancement (Maj+F11)</span></div>
<div class="a msep" style="top:334px"></div>
<div class="a mi" style="top:338px"><span>Informations Suivies (F3)</span></div>
<div class="a msep" style="top:363px"></div>
<div class="a mi" style="top:367px"><span>Déclaration Co-Produits</span></div>
<div class="a msep" style="top:392px"></div>
<div class="a mi" style="top:396px"><span>Consultation Charge Ressource</span><svg class="arr" width="8" height="8" viewBox="0 0 8 8"><polyline points="2,0.5 5.5,4 2,7.5" fill="none" stroke="#333" stroke-width="1.3"/></svg></div>
<div class="a mi" style="top:418px"><span>Consultation Charge Famille</span><svg class="arr" width="8" height="8" viewBox="0 0 8 8"><polyline points="2,0.5 5.5,4 2,7.5" fill="none" stroke="#333" stroke-width="1.3"/></svg></div>
<div class="a msep" style="top:443px"></div>
<div class="a mi" style="top:447px"><span>Détail Car. Technique (F8)</span></div>
<div class="a mi" style="top:469px"><span>His. Déc. FAT/ CT (Maj+F10)</span></div>
<div class="a mi" style="top:491px"><span>His. Déclarations / OF (F10)</span></div>
<div class="a mi" style="top:513px"><span>Visualisation File d'Attente (F12)</span></div>
<div class="a msep" style="top:538px"></div>
<div class="a mi" style="top:542px"><span>Définition Filtres et Tris</span></div>
<div class="a mi" style="top:564px"><span>Sélections Filtres et Tris</span><svg class="arr" width="8" height="8" viewBox="0 0 8 8"><polyline points="2,0.5 5.5,4 2,7.5" fill="none" stroke="#333" stroke-width="1.3"/></svg></div>
<div class="a mi" style="top:586px"><span>Condition par Défaut (Ctrl-F5)</span></div>
<div class="a msep" style="top:611px"></div>
<div class="a mi" style="top:615px"><span>Actions</span><svg class="arr" width="8" height="8" viewBox="0 0 8 8"><polyline points="2,0.5 5.5,4 2,7.5" fill="none" stroke="#333" stroke-width="1.3"/></svg></div>
</div>
<div id="sub" class="a">
<div class="a mi hl" style="top:2px;width:224px"><span>Affectation Sous-Traitance</span></div>
<div class="a mi" style="top:24px;width:224px"><span>Génération Demande App.</span></div>
<div class="a mi" style="top:46px;width:224px"><span>Modification Date Besoin</span></div>
</div>
</body></html>
